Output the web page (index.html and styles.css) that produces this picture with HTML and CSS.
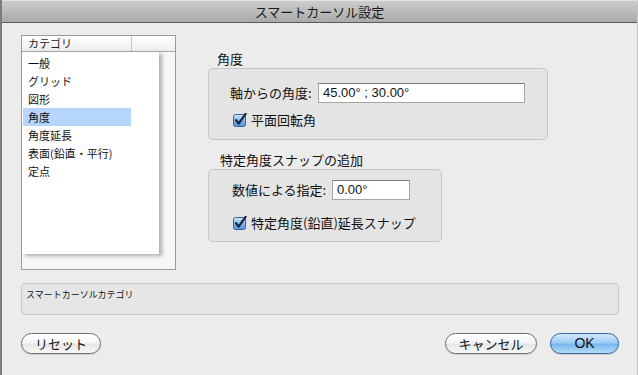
FILE: index.html
```html
<!DOCTYPE html>
<html lang="ja">
<head>
<meta charset="utf-8">
<title>スマートカーソル設定</title>
<link rel="stylesheet" href="styles.css">
</head>
<body>
<div class="window">
  <div class="titlebar">スマートカーソル設定</div>
  <div class="content">
    <div class="main">
      <div class="catlist">
        <div class="cathead"><span class="col1">カテゴリ</span><span class="col2"></span></div>
        <div class="catbody">
          <div class="catpane">
            <div class="item">一般</div>
            <div class="item">グリッド</div>
            <div class="item">図形</div>
            <div class="item sel">角度</div>
            <div class="item">角度延長</div>
            <div class="item">表面(鉛直・平行)</div>
            <div class="item">定点</div>
          </div>
        </div>
      </div>
      <div class="panel">
        <div class="grouplabel">角度</div>
        <div class="group g1">
          <div class="row">
            <span class="lbl l1">軸からの角度:</span>
            <span class="field f1">45.00° ; 30.00°</span>
          </div>
          <div class="check c1">
            <svg class="cb" width="14" height="14" viewBox="0 0 14 14">
              <defs>
                <linearGradient id="cbg1" x1="0" y1="0" x2="0" y2="1">
                  <stop offset="0" stop-color="#cfe6fb"/>
                  <stop offset="0.5" stop-color="#7fb8ea"/>
                  <stop offset="1" stop-color="#4f93d8"/>
                </linearGradient>
              </defs>
              <rect x="0.5" y="1.5" width="12" height="12" rx="2" fill="url(#cbg1)" stroke="#3d628f"/>
              <path d="M3 7.2 L5.6 10.6 L12.6 0.8" fill="none" stroke="#16243f" stroke-width="2.2" stroke-linecap="round" stroke-linejoin="round"/>
            </svg>
            <span>平面回転角</span>
          </div>
        </div>
        <div class="grouplabel gl2">特定角度スナップの追加</div>
        <div class="group g2">
          <div class="row">
            <span class="lbl l2">数値による指定:</span>
            <span class="field f2">0.00°</span>
          </div>
          <div class="check c2">
            <svg class="cb" width="14" height="14" viewBox="0 0 14 14">
              <defs>
                <linearGradient id="cbg2" x1="0" y1="0" x2="0" y2="1">
                  <stop offset="0" stop-color="#cfe6fb"/>
                  <stop offset="0.5" stop-color="#7fb8ea"/>
                  <stop offset="1" stop-color="#4f93d8"/>
                </linearGradient>
              </defs>
              <rect x="0.5" y="1.5" width="12" height="12" rx="2" fill="url(#cbg2)" stroke="#3d628f"/>
              <path d="M3 7.2 L5.6 10.6 L12.6 0.8" fill="none" stroke="#16243f" stroke-width="2.2" stroke-linecap="round" stroke-linejoin="round"/>
            </svg>
            <span>特定角度(鉛直)延長スナップ</span>
          </div>
        </div>
      </div>
    </div>
    <div class="desc">スマートカーソルカテゴリ</div>
    <div class="buttons">
      <button class="btn reset">リセット</button>
      <div class="spacer"></div>
      <button class="btn cancel">キャンセル</button>
      <button class="btn ok">OK</button>
    </div>
  </div>
</div>
</body>
</html>
```

FILE: styles.css
```css
* { box-sizing: border-box; }
html, body { margin: 0; padding: 0; background: #ececec; }
body {
  font-family: "Noto Sans CJK JP", "Liberation Sans", sans-serif;
  color: #111;
}
.window {
  width: 638px;
  height: 375px;
  background: #ececec;
  border-left: 2px solid #7c7c7c;
  border-right: 1px solid #c4c4c4;
  overflow: hidden;
}
.titlebar {
  height: 23px;
  border-top: 1px solid #e4e4e4;
  border-bottom: 1px solid #5a5a5a;
  background: linear-gradient(#cdcdcd, #a9a9a9);
  text-align: center;
  font-size: 13px;
  line-height: 21px;
  color: #1a1a1a;
}
.content {
  padding: 12px 18px 0 19px;
}
.main {
  display: flex;
  height: 235px;
}
.catlist {
  width: 155px;
  height: 235px;
  border: 1px solid #9c9c9c;
  background: #f7f7f7;
  display: flex;
  flex-direction: column;
}
.cathead {
  display: flex;
  height: 16px;
  border-bottom: 1px solid #a8a8a8;
  background: linear-gradient(#ffffff, #ececec);
  font-size: 11px;
  line-height: 15px;
}
.cathead .col1 {
  width: 110px;
  padding-left: 6px;
  border-right: 1px solid #c2c2c2;
  color: #222;
}
.catbody {
  flex: 1;
}
.catpane {
  width: 137px;
  height: 202px;
  background: #fff;
  padding-top: 2px;
  box-shadow: 3px 2px 4px rgba(0, 0, 0, 0.3);
}
.item {
  height: 18px;
  line-height: 18px;
  font-size: 11px;
  padding-left: 6px;
  color: #111;
}
.item.sel {
  background: #b5d5fd;
  width: 108px;
  margin-left: 1px;
  padding-left: 5px;
}
.panel {
  margin-left: 32px;
  flex: 1;
}
.grouplabel {
  height: 16px;
  line-height: 16px;
  font-size: 13px;
  padding-left: 9px;
  margin-top: 16px;
  margin-bottom: 1px;
}
.grouplabel.gl2 {
  margin-top: 12px;
  padding-left: 12px;
}
.group {
  border: 1px solid #c6c6c6;
  border-radius: 5px;
  background: #e4e4e4;
}
.g1 {
  width: 340px;
  height: 72px;
  padding: 14px 0 0 21px;
}
.g2 {
  width: 234px;
  height: 73px;
  padding: 10px 0 0 23px;
}
.row {
  display: flex;
  align-items: center;
  height: 20px;
}
.lbl {
  font-size: 13px;
  line-height: 20px;
}
.l1 { width: 88px; }
.l2 { width: 100px; }
.field {
  height: 20px;
  background: #fff;
  border: 1px solid #a6a6a6;
  border-top-color: #7c7c7c;
  font-family: "Liberation Sans", Arial, sans-serif;
  font-size: 13px;
  line-height: 18px;
  padding-left: 4px;
  color: #111;
}
.f1 { width: 207px; }
.f2 { width: 78px; }
.check {
  display: flex;
  align-items: center;
  height: 16px;
  font-size: 13px;
  line-height: 16px;
}
.c1 { margin-top: 9px; margin-left: 3px; }
.c2 { margin-top: 15px; margin-left: 1px; }
.cb {
  display: block;
  margin-right: 4px;
}
.desc {
  margin-top: 13px;
  height: 32px;
  border: 1px solid #c8c8c8;
  border-radius: 4px;
  background: #e6e6e6;
  font-size: 9px;
  line-height: 12px;
  padding: 5px 0 0 4px;
  color: #111;
}
.buttons {
  display: flex;
  margin-top: 18px;
  height: 21px;
}
.spacer { flex: 1; }
.btn {
  height: 21px;
  border: 1px solid #6c6c6c;
  border-radius: 11px;
  background: linear-gradient(#ffffff 0%, #f6f6f6 45%, #e6e6e6 55%, #f8f8f8 100%);
  font-family: "Noto Sans CJK JP", "Liberation Sans", sans-serif;
  font-size: 13px;
  line-height: 19px;
  padding: 0;
  color: #111;
  box-shadow: 0 1px 1px rgba(0, 0, 0, 0.12);
}
.reset { width: 80px; }
.cancel { width: 92px; }
.ok {
  width: 69px;
  margin-left: 13px;
  border-color: #34619c;
  background: linear-gradient(#d0e8fc 0%, #9fcdf5 45%, #78b7ef 55%, #b4ddfb 100%);
  font-family: "Liberation Sans", Arial, sans-serif;
  font-size: 14px;
}
```
